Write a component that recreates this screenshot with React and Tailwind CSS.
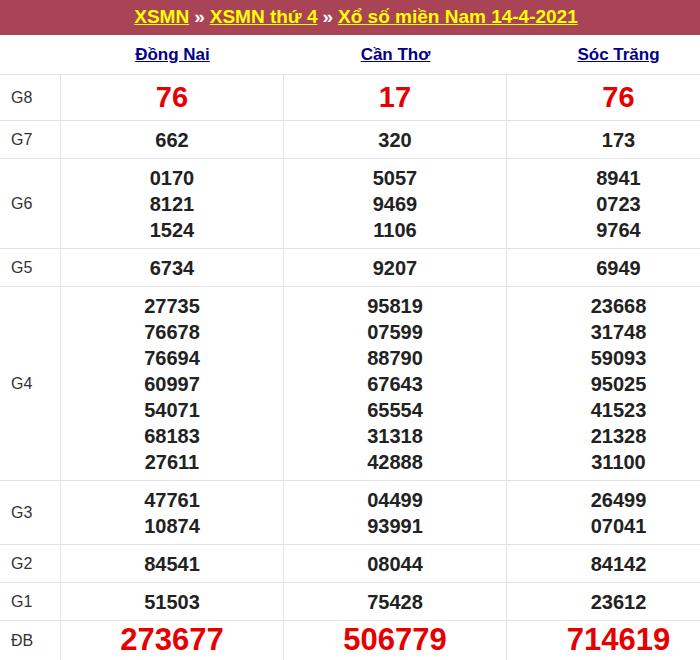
const cols=[["Đồng Nai","Cần Thơ","Sóc Trăng"]];
const rows=[
["G8",[["76"],["17"],["76"]],"g8"],
["G7",[["662"],["320"],["173"]]],
["G6",[["0170","8121","1524"],["5057","9469","1106"],["8941","0723","9764"]]],
["G5",[["6734"],["9207"],["6949"]]],
["G4",[["27735","76678","76694","60997","54071","68183","27611"],["95819","07599","88790","67643","65554","31318","42888"],["23668","31748","59093","95025","41523","21328","31100"]]],
["G3",[["47761","10874"],["04499","93991"],["26499","07041"]]],
["G2",[["84541"],["08044"],["84142"]]],
["G1",[["51503"],["75428"],["23612"]]],
["ĐB",[["273677"],["506779"],["714619"]],"db"],
];
export default function App(){
return <div className="w-[700px] h-[660px] overflow-hidden bg-white" style={{fontFamily:"Arial, 'Liberation Sans', sans-serif"}}>
<div className="h-[35px] bg-[#a94457] flex items-center justify-center text-[19px] font-bold text-[#ffff00] gap-[5px] pl-[12px]">
<span className="underline">XSMN</span><span className="text-white">»</span><span className="underline">XSMN thứ 4</span><span className="text-white">»</span><span className="underline">Xổ số miền Nam 14-4-2021</span>
</div>
<div className="grid grid-cols-[61px_223px_223px_223px] w-[730px]">
<div className="h-[40px] border-b border-[#e3e3e3]"></div>
{cols[0].map(c=><div key={c} className="h-[40px] border-b border-[#e3e3e3] flex items-center justify-center text-[17px] font-bold text-[#00008b] underline">{c}</div>)}
{rows.map(([g,vals,t])=><>
<div key={g} className="border-b border-r border-[#e3e3e3] flex items-center pl-[11px] text-[16px] text-[#333]">{g}</div>
{vals.map((v,i)=><div key={i} className={"border-b border-[#e3e3e3] flex flex-col items-center justify-center font-bold "+(i<2?"border-r ":"")+(t==="g8"?"h-[46px] text-[29px] text-[#e60000]":t==="db"?"h-[40px] text-[31px] text-[#e60000]":"pt-[6px] pb-[5px] text-[20px] leading-[26px] text-[#222]")}>
{v.map((n,j)=><div key={j}>{n}</div>)}
</div>)}
</>)}
</div>
</div>;
}
